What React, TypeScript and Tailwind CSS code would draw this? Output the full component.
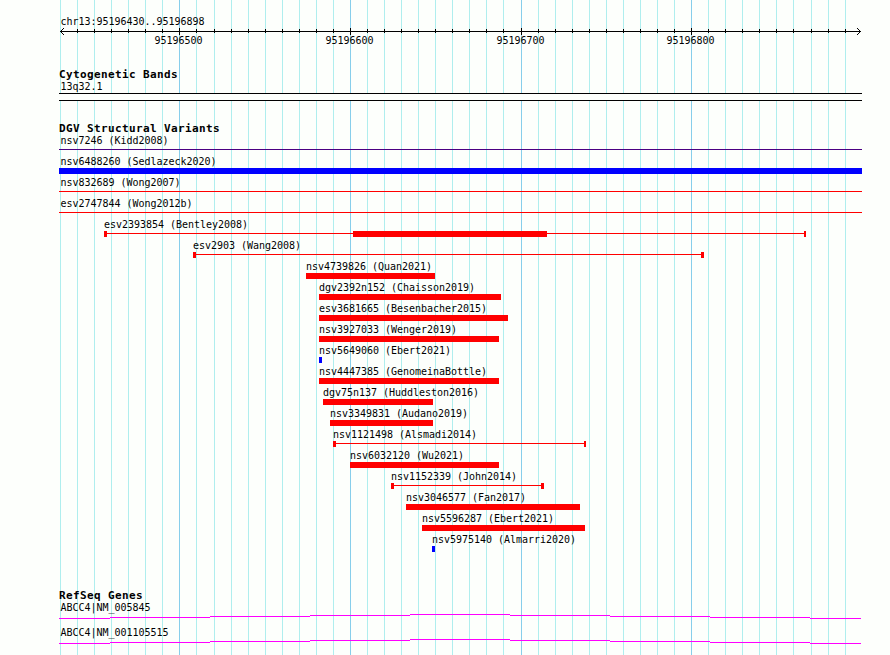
type Variant = {
  name: string;
  start: number;
  end: number;
  kind: 'line' | 'bar' | 'range';
  color: string;
  startCap?: number;
  endCap?: number;
  core?: [number, number];
};

const ORIGIN = 59;
const WIDTH = 803;
const RED = 'bg-[#ff0000]';
const BLUE = 'bg-[#0000ff]';

const MAJOR = [179, 350, 521, 691];
const GRID = [
  60, 77, 94, 111, 128, 145, 162, 179, 196, 214, 231, 248, 265, 282, 299, 316,
  333, 350, 367, 384, 401, 418, 435, 452, 469, 486, 503, 521, 538, 555, 572,
  589, 606, 623, 640, 657, 674, 691, 708, 725, 742, 759, 776, 793, 811, 828, 845,
];

const VARIANTS: Variant[] = [
  { name: 'nsv7246 (Kidd2008)', start: 59, end: 862, kind: 'line', color: 'bg-[#4b0082]' },
  { name: 'nsv6488260 (Sedlazeck2020)', start: 59, end: 862, kind: 'bar', color: BLUE },
  { name: 'nsv832689 (Wong2007)', start: 59, end: 862, kind: 'line', color: RED },
  { name: 'esv2747844 (Wong2012b)', start: 59, end: 862, kind: 'line', color: RED },
  { name: 'esv2393854 (Bentley2008)', start: 104, end: 806, kind: 'range', color: RED, startCap: 3, endCap: 2, core: [353, 547] },
  { name: 'esv2903 (Wang2008)', start: 193, end: 704, kind: 'range', color: RED, startCap: 3, endCap: 3 },
  { name: 'nsv4739826 (Quan2021)', start: 306, end: 435, kind: 'bar', color: RED },
  { name: 'dgv2392n152 (Chaisson2019)', start: 319, end: 501, kind: 'bar', color: RED },
  { name: 'esv3681665 (Besenbacher2015)', start: 319, end: 508, kind: 'bar', color: RED },
  { name: 'nsv3927033 (Wenger2019)', start: 319, end: 499, kind: 'bar', color: RED },
  { name: 'nsv5649060 (Ebert2021)', start: 319, end: 322, kind: 'bar', color: BLUE },
  { name: 'nsv4447385 (GenomeinaBottle)', start: 319, end: 499, kind: 'bar', color: RED },
  { name: 'dgv75n137 (Huddleston2016)', start: 323, end: 433, kind: 'bar', color: RED },
  { name: 'nsv3349831 (Audano2019)', start: 330, end: 433, kind: 'bar', color: RED },
  { name: 'nsv1121498 (Alsmadi2014)', start: 333, end: 586, kind: 'range', color: RED, startCap: 3, endCap: 2 },
  { name: 'nsv6032120 (Wu2021)', start: 350, end: 499, kind: 'bar', color: RED },
  { name: 'nsv1152339 (John2014)', start: 391, end: 544, kind: 'range', color: RED, startCap: 3, endCap: 3 },
  { name: 'nsv3046577 (Fan2017)', start: 406, end: 580, kind: 'bar', color: RED },
  { name: 'nsv5596287 (Ebert2021)', start: 422, end: 585, kind: 'bar', color: RED },
  { name: 'nsv5975140 (Almarri2020)', start: 432, end: 435, kind: 'bar', color: BLUE },
];

function GridLines() {
  return (
    <div className="absolute inset-0 flex">
      {GRID.map((x, i) => (
        <div
          key={x}
          className={`h-full w-px shrink-0 ${MAJOR.includes(x) ? 'bg-[#87ceeb]' : 'bg-[#afeeee]'}`}
          style={{ marginLeft: i === 0 ? x : x - GRID[i - 1] - 1 }}
        />
      ))}
    </div>
  );
}

function Heading({ children }: { children: string }) {
  return (
    <h2 className="h-[13px] text-[11px] leading-[13px] font-bold tracking-[0.378px] whitespace-pre">{children}</h2>
  );
}

function Label({ children, offset = 1.5 }: { children: string; offset?: number }) {
  return (
    <div className="h-[13px] whitespace-pre" style={{ paddingLeft: offset }}>
      {children}
    </div>
  );
}

function Axis() {
  return (
    <svg className="block h-[7px] w-[803px]" viewBox="59 28 803 7" shapeRendering="crispEdges">
      <rect x="60" y="31" width="801" height="1" />
      {GRID.slice(1).map((x) =>
        MAJOR.includes(x) ? (
          <rect key={x} x={x} y="28" width="1" height="7" />
        ) : (
          <rect key={x} x={x} y="29" width="1" height="4" />
        ),
      )}
      {[1, 2, 3].map((d) => (
        <g key={d}>
          <rect x={60 + d} y={31 - d} width="1" height="1" />
          <rect x={60 + d} y={31 + d} width="1" height="1" />
          <rect x={860 - d} y={31 - d} width="1" height="1" />
          <rect x={860 - d} y={31 + d} width="1" height="1" />
        </g>
      ))}
    </svg>
  );
}

function Glyph({ v }: { v: Variant }) {
  if (v.kind !== 'range') {
    return (
      <div className="flex h-1.5" style={{ paddingLeft: v.start - ORIGIN }}>
        <div
          className={`${v.color} ${v.kind === 'line' ? 'mt-0.5 h-px' : 'h-1.5'}`}
          style={{ width: v.end - v.start }}
        />
      </div>
    );
  }
  const left = v.start + (v.startCap ?? 0);
  const right = v.end - (v.endCap ?? 0);
  return (
    <div className="flex h-1.5" style={{ paddingLeft: v.start - ORIGIN }}>
      <div className={`h-1.5 ${v.color}`} style={{ width: v.startCap }} />
      {v.core ? (
        <>
          <div className={`mt-0.5 h-px ${v.color}`} style={{ width: v.core[0] - left }} />
          <div className={`h-1.5 ${v.color}`} style={{ width: v.core[1] - v.core[0] }} />
          <div className={`mt-0.5 h-px ${v.color}`} style={{ width: right - v.core[1] }} />
        </>
      ) : (
        <div className={`mt-0.5 h-px ${v.color}`} style={{ width: right - left }} />
      )}
      <div className={`h-1.5 ${v.color}`} style={{ width: v.endCap }} />
    </div>
  );
}

const STEPS: [number, number][] = [
  [51, 4], [100, 3], [100, 2], [100, 1], [100, 0], [100, 1], [100, 2], [100, 3], [51, 4],
];

function Gene({ name }: { name: string }) {
  return (
    <div className="h-[25px]">
      <Label>{name}</Label>
      <div className="flex h-[5px]">
        {STEPS.map(([w, y], i) => (
          <div key={i} className="h-px bg-[#ff00ff]" style={{ width: w, marginTop: y }} />
        ))}
      </div>
    </div>
  );
}

export default function App() {
  return (
    <main className="relative h-[655px] w-[890px] overflow-hidden bg-[#fdfffc] font-['DejaVu_Sans_Mono','Liberation_Mono',monospace] text-[10px] leading-[13px] tracking-[-0.02px] text-black">
      <GridLines />
      <div className="relative ml-[59px] flex w-[803px] flex-col pt-[15px]">
        <Label>chr13:95196430..95196898</Label>
        <Axis />
        <div className="-mt-px flex h-[13px]">
          {MAJOR.map((x, i) => (
            <span
              key={x}
              className="w-12 shrink-0"
              style={{ marginLeft: i === 0 ? x - 24.5 - ORIGIN : x - MAJOR[i - 1] - 48 }}
            >
              {95196500 + i * 100}
            </span>
          ))}
        </div>

        <section className="mt-[21px]">
          <Heading>Cytogenetic Bands</Heading>
          <div className="-mt-px">
            <Label>13q32.1</Label>
          </div>
          <div className="h-2 border-y border-black bg-[#fdfffc]" style={{ width: WIDTH }} />
        </section>

        <section className="mt-[21px]">
          <Heading>DGV Structural Variants</Heading>
          <div className="-mt-px">
            {VARIANTS.map((v) => (
              <div key={v.name} className="h-[21px]">
                <Label offset={v.start === ORIGIN ? 1.5 : v.start - ORIGIN}>{v.name}</Label>
                <Glyph v={v} />
              </div>
            ))}
          </div>
        </section>

        <section className="mt-[35px]">
          <Heading>RefSeq Genes</Heading>
          <div className="-mt-px">
            <Gene name="ABCC4|NM_005845" />
            <Gene name="ABCC4|NM_001105515" />
          </div>
        </section>
      </div>
    </main>
  );
}
